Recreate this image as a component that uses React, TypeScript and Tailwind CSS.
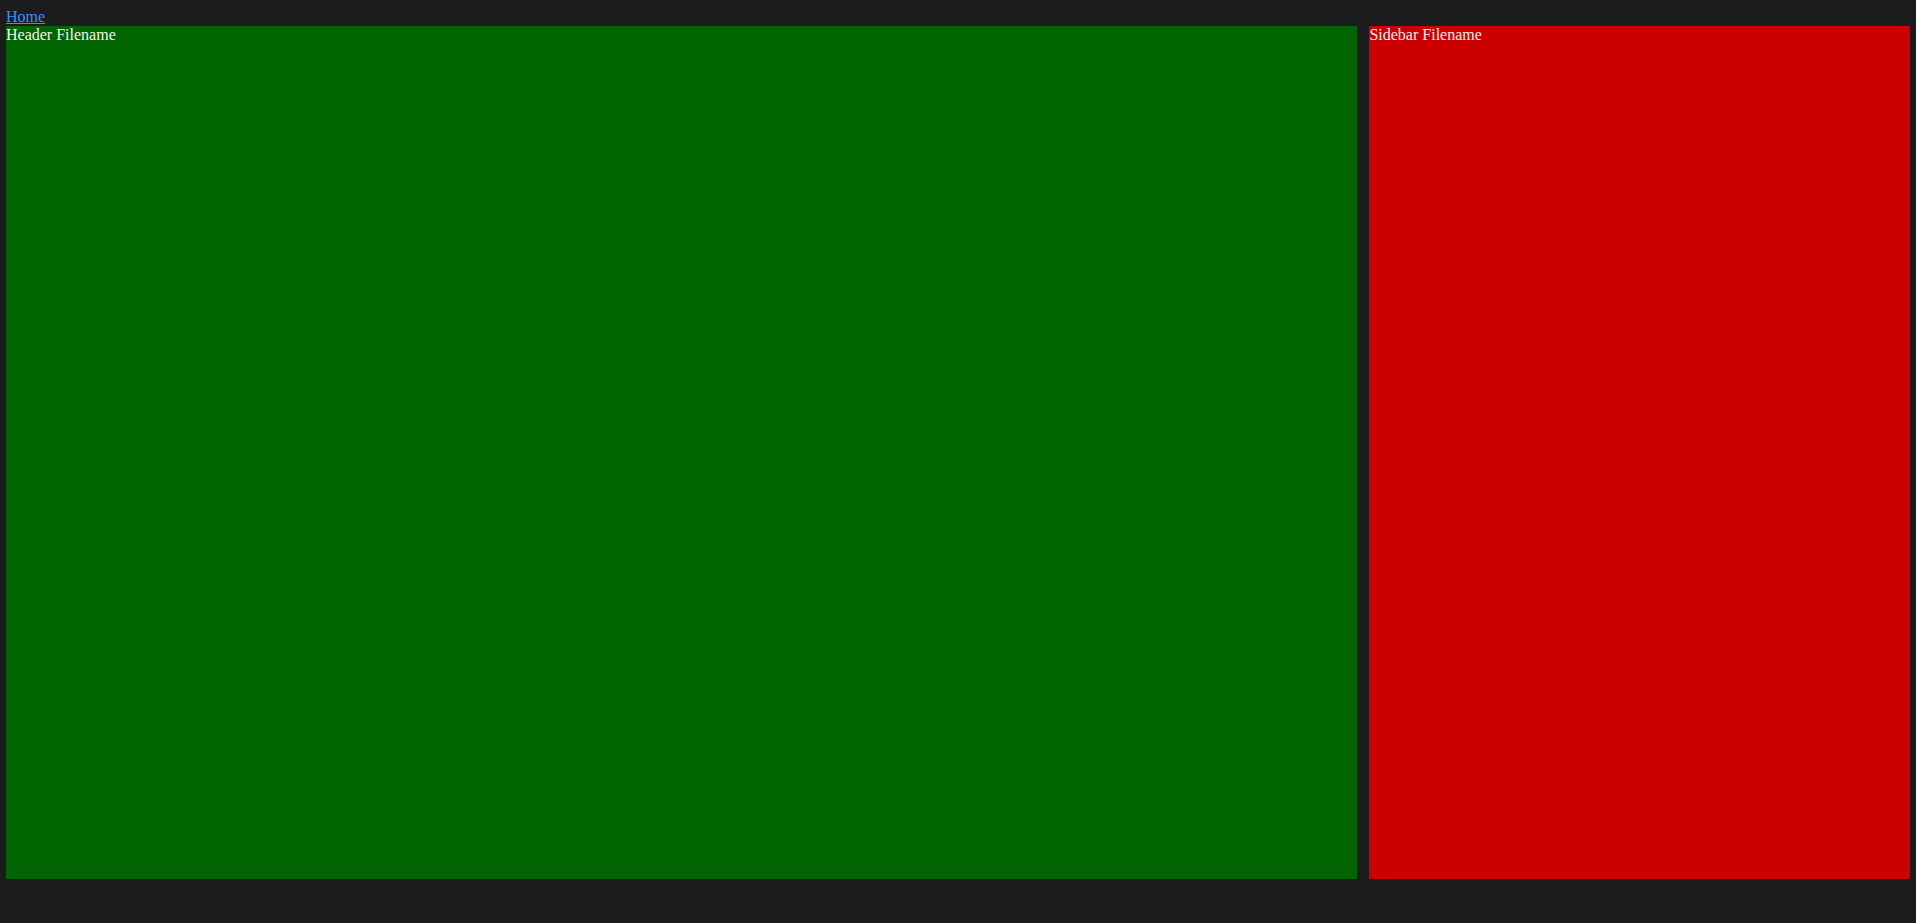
export default function App() {
  return (
    <div className="min-h-[923px] bg-[#1b1c1e] px-[6px] pt-[8px] font-['Liberation_Serif',serif] text-[16px] leading-[18px] text-[#f4f2ee]">
      <a href="#" className="text-[#3391ff] underline">
        Home
      </a>
      <div className="grid h-[853px] grid-cols-[5fr_2fr] gap-[12px]">
        <div className="bg-[#006400]">Header Filename</div>
        <div className="bg-[#cc0000]">Sidebar Filename</div>
      </div>
    </div>
  );
}
